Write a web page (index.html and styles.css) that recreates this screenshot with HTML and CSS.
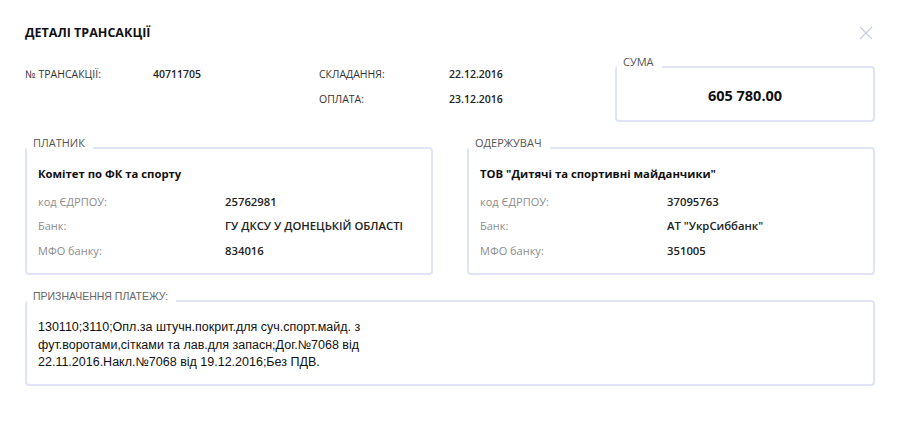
FILE: index.html
```html
<!DOCTYPE html>
<html lang="uk">
<head>
<meta charset="utf-8">
<title>Деталі трансакції</title>
<link rel="stylesheet" href="styles.css">
</head>
<body>
<div class="dialog">
  <header class="head">
    <h1 class="title">ДЕТАЛІ ТРАНСАКЦІЇ</h1>
    <button class="close" aria-label="Закрити">
      <svg width="14" height="14" viewBox="0 0 14 14"><path d="M1 1L13 13M13 1L1 13" stroke="#c9cee0" stroke-width="1.2" fill="none"/></svg>
    </button>
  </header>

  <section class="summary">
    <div class="meta">
      <span class="m-label">№ ТРАНСАКЦІЇ:</span>
      <span class="m-value">40711705</span>
      <span class="m-label">СКЛАДАННЯ:</span>
      <span class="m-value">22.12.2016</span>
      <span></span>
      <span></span>
      <span class="m-label">ОПЛАТА:</span>
      <span class="m-value">23.12.2016</span>
    </div>
    <fieldset class="box sum">
      <legend>СУМА</legend>
      <div class="amount">605 780.00</div>
    </fieldset>
  </section>

  <section class="parties">
    <fieldset class="box party">
      <legend>ПЛАТНИК</legend>
      <div class="party-body">
        <div class="p-name">Комітет по ФК та спорту</div>
        <div class="p-row"><span class="p-label">код ЄДРПОУ:</span><span class="p-value">25762981</span></div>
        <div class="p-row"><span class="p-label">Банк:</span><span class="p-value">ГУ ДКСУ У ДОНЕЦЬКІЙ ОБЛАСТІ</span></div>
        <div class="p-row"><span class="p-label">МФО банку:</span><span class="p-value">834016</span></div>
      </div>
    </fieldset>
    <fieldset class="box party">
      <legend>ОДЕРЖУВАЧ</legend>
      <div class="party-body">
        <div class="p-name">ТОВ "Дитячі та спортивні майданчики"</div>
        <div class="p-row"><span class="p-label">код ЄДРПОУ:</span><span class="p-value">37095763</span></div>
        <div class="p-row"><span class="p-label">Банк:</span><span class="p-value">АТ "УкрСиббанк"</span></div>
        <div class="p-row"><span class="p-label">МФО банку:</span><span class="p-value">351005</span></div>
      </div>
    </fieldset>
  </section>

  <fieldset class="box purpose">
    <legend>ПРИЗНАЧЕННЯ ПЛАТЕЖУ:</legend>
    <div class="purpose-text">130110;3110;Опл.за штучн.покрит.для суч.спорт.майд. з<br>фут.воротами,сітками та лав.для запасн;Дог.№7068 від<br>22.11.2016.Накл.№7068 від 19.12.2016;Без ПДВ.</div>
  </fieldset>
</div>
</body>
</html>
```
FILE: styles.css
```css
* { box-sizing: border-box; }
html, body { margin: 0; padding: 0; background: #fff; }
body {
  font-family: "Open Sans", "Liberation Sans", sans-serif;
  color: #222;
}
.dialog {
  width: 900px;
  padding: 0 25px;
}
.head {
  display: flex;
  justify-content: space-between;
  align-items: flex-start;
  padding-top: 24px;
  height: 56px;
}
.title {
  margin: 0;
  font-size: 12.5px;
  line-height: 18px;
  font-weight: 700;
  color: #111;
}
.close {
  border: 0;
  background: none;
  padding: 0;
  margin: 1px 1px 0 0;
  width: 16px;
  height: 16px;
  display: flex;
  align-items: center;
  justify-content: center;
}

.summary {
  display: flex;
  justify-content: space-between;
  align-items: flex-start;
}
.meta {
  display: grid;
  grid-template-columns: 128px 166px 130px 100px;
  grid-auto-rows: 25px;
  padding-top: 5px;
  font-size: 10.5px;
  align-items: center;
}
.m-label { color: #333; }
.m-value { color: #222; font-weight: 600; }

.box {
  margin: 0;
  padding: 0;
  min-width: 0;
  border: 2px solid #e0e4f6;
  border-radius: 4px;
}
.box legend {
  padding: 0 8px 10px 6px;
  font-size: 11px;
  line-height: 12px;
  color: #555;
}
.sum {
  width: 260px;
  height: 66px;
}
.amount {
  text-align: center;
  font-weight: 700;
  font-size: 14.5px;
  line-height: 20px;
  color: #111;
  padding-top: 8px;
}

.parties {
  display: flex;
  justify-content: space-between;
  margin-top: 15px;
}
.party { width: 408px; }
.party-body {
  padding: 5px 11px 10px;
}
.p-name {
  font-size: 11.3px;
  font-weight: 700;
  line-height: 20px;
  color: #111;
  margin-bottom: 6px;
}
.p-row {
  display: flex;
  font-size: 11px;
  line-height: 24.4px;
}
.p-label { width: 187px; color: #8c8c8c; }
.p-value { font-weight: 600; color: #222; font-size: 11.3px; }

.purpose {
  margin-top: 15px;
  width: 850px;
}
.purpose legend {
  font-family: "Liberation Sans", Arial, sans-serif;
  font-size: 10.5px;
  color: #666;
}
.purpose-text {
  font-family: "Liberation Sans", Arial, sans-serif;
  font-size: 12.5px;
  line-height: 17.5px;
  color: #111;
  padding: 7px 11px 12px;
}
```
